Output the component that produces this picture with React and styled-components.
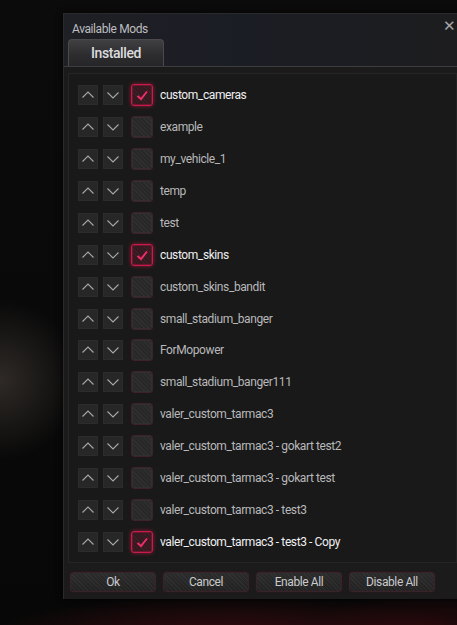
import React from 'react';
import styled, { createGlobalStyle } from 'styled-components';

const GlobalStyle = createGlobalStyle`
  html, body {
    margin: 0;
    padding: 0;
    background: #060606;
    overflow: hidden;
  }
  body {
    font-family: Roboto, 'Liberation Sans', sans-serif;
  }
`;

const Scene = styled.div`
  position: relative;
  width: 457px;
  height: 625px;
  overflow: hidden;
  background:
    radial-gradient(ellipse 80px 80px at 0px 380px, rgba(72, 64, 58, 0.6), transparent),
    radial-gradient(ellipse 260px 50px at 230px 645px, rgba(78, 14, 20, 0.8), transparent),
    radial-gradient(ellipse 120px 40px at 430px 630px, rgba(60, 10, 14, 0.6), transparent),
    linear-gradient(#0b0b0c, #070707);
  padding: 13px 0 0 63px;
  box-sizing: border-box;
`;

const Window = styled.div`
  width: 400px;
  height: 586px;
  box-sizing: border-box;
  background: #1a1a1a;
  border: 1px solid #2a2a2c;
  border-right: none;
  display: flex;
  flex-direction: column;
  box-shadow: 0 0 6px rgba(0, 0, 0, 0.8);
`;

const Header = styled.div`
  position: relative;
  background: linear-gradient(90deg, #1f2026 0%, #1b1d24 45%, #1d1d1f 100%);
  padding: 7px 0 0 4px;
  display: flex;
  flex-direction: column;
  border-bottom: 1px solid #3d3d3f;
`;

const Title = styled.div`
  color: #bdbdbf;
  font-size: 12px;
  line-height: 16px;
  height: 18px;
  padding-left: 4px;
  letter-spacing: -0.4px;
`;

const Close = styled.div`
  position: absolute;
  top: 5px;
  right: 7px;
  color: #a5a5a7;
  font-size: 15px;
  line-height: 15px;
`;

const Tab = styled.div`
  width: 96px;
  height: 27px;
  box-sizing: border-box;
  border-radius: 4px 4px 0 0;
  border: 1px solid #4a4a4c;
  border-bottom: none;
  background: linear-gradient(#404042, #2c2c2e 60%, #262628);
  color: #dcdcde;
  font-size: 14px;
  font-weight: 500;
  display: flex;
  align-items: center;
  justify-content: center;
  letter-spacing: -0.4px;
`;

const Body = styled.div`
  flex: 1;
  display: flex;
  flex-direction: column;
  padding: 6px 4px 7px 4px;
  background: #1b1b1b;
`;

const List = styled.div`
  height: 490px;
  box-sizing: border-box;
  background: #191919;
  border: 1px solid #262626;
  border-right: 3px solid #222;
  padding: 5px 0 4px 9px;
  display: flex;
  flex-direction: column;
`;

const Row = styled.div`
  height: 32px;
  display: flex;
  align-items: center;
  gap: 5px;
`;

const Arrow = styled.div`
  width: 20px;
  height: 20px;
  background: #272727;
  display: flex;
  align-items: center;
  justify-content: center;
  box-shadow: inset 0 0 0 1px #2c2c2c;
`;

const Check = styled.div`
  width: 22px;
  height: 22px;
  margin-left: 3px;
  box-sizing: border-box;
  border-radius: 3px;
  border: 1px solid ${p => (p.on ? '#c41c4c' : '#40202a')};
  background:
    repeating-linear-gradient(45deg, rgba(255,255,255,0.035) 0 1px, transparent 1px 3px),
    ${p => (p.on ? '#351820' : '#282828')};
  box-shadow: ${p => (p.on
    ? '0 0 4px rgba(220, 30, 80, 0.6), inset 0 0 0 1px rgba(120, 20, 45, 0.9)'
    : 'inset 0 0 0 1px #303030')};
  display: flex;
  align-items: center;
  justify-content: center;
`;

const Label = styled.span`
  margin-left: 2px;
  font-size: 12px;
  letter-spacing: -0.4px;
  color: ${p => (p.on ? '#f0f0f2' : '#b8b8ba')};
`;

const Buttons = styled.div`
  display: flex;
  gap: 7px;
  margin-top: 9px;
  padding-left: 2px;
`;

const Button = styled.div`
  width: 86px;
  height: 20px;
  box-sizing: border-box;
  border-radius: 3px;
  border: 1px solid #3b2229;
  background:
    repeating-linear-gradient(45deg, rgba(255,255,255,0.035) 0 1px, transparent 1px 3px),
    linear-gradient(#2b2b2b, #222);
  color: #cacacc;
  font-size: 12px;
  letter-spacing: -0.4px;
  display: flex;
  align-items: center;
  justify-content: center;
  box-shadow: 0 0 2px rgba(90, 20, 35, 0.5);
`;

const Up = () => (
  <svg width="14" height="10" viewBox="0 0 14 10">
    <path d="M1.5 7.5 L7 2 L12.5 7.5" fill="none" stroke="#a8a8a8" strokeWidth="1.1" />
  </svg>
);

const Down = () => (
  <svg width="14" height="10" viewBox="0 0 14 10">
    <path d="M1.5 2.5 L7 8 L12.5 2.5" fill="none" stroke="#a8a8a8" strokeWidth="1.1" />
  </svg>
);

const Tick = () => (
  <svg width="14" height="14" viewBox="0 0 14 14">
    <path d="M2.5 8 L6 11 L12 3.5" fill="none" stroke="#ee2c68" strokeWidth="2" />
  </svg>
);

const mods = [
  ['custom_cameras', true],
  ['example', false],
  ['my_vehicle_1', false],
  ['temp', false],
  ['test', false],
  ['custom_skins', true],
  ['custom_skins_bandit', false],
  ['small_stadium_banger', false],
  ['ForMopower', false],
  ['small_stadium_banger111', false],
  ['valer_custom_tarmac3', false],
  ['valer_custom_tarmac3 - gokart test2', false],
  ['valer_custom_tarmac3 - gokart test', false],
  ['valer_custom_tarmac3 - test3', false],
  ['valer_custom_tarmac3 - test3 - Copy', true],
];

const App = () => (
  <>
    <GlobalStyle />
    <Scene>
      <Window>
        <Header>
          <Title>Available Mods</Title>
          <Close>✕</Close>
          <Tab>Installed</Tab>
        </Header>
        <Body>
          <List>
            {mods.map(([name, on]) => (
              <Row key={name}>
                <Arrow><Up /></Arrow>
                <Arrow><Down /></Arrow>
                <Check on={on}>{on && <Tick />}</Check>
                <Label on={on}>{name}</Label>
              </Row>
            ))}
          </List>
          <Buttons>
            <Button>Ok</Button>
            <Button>Cancel</Button>
            <Button>Enable All</Button>
            <Button>Disable All</Button>
          </Buttons>
        </Body>
      </Window>
    </Scene>
  </>
);

export default App;
